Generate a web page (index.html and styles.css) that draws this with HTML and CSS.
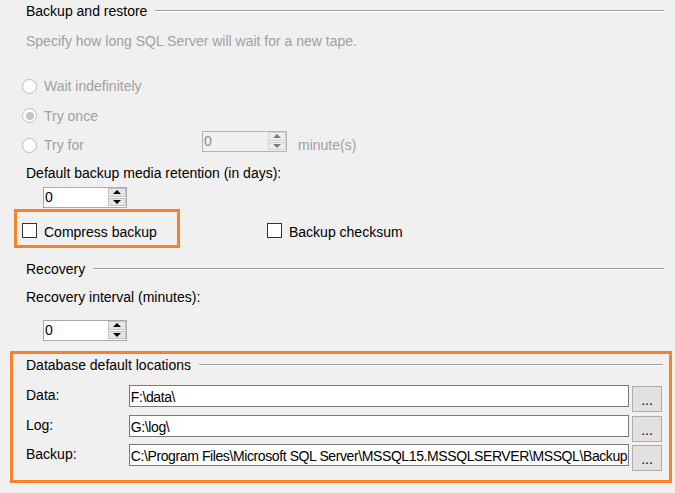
FILE: index.html
```html
<!DOCTYPE html>
<html lang="en">
<head>
    <meta charset="UTF-8">
    <title>Database Settings</title>
    <link rel="stylesheet" href="styles.css">
</head>
<body>
    <div class="page">
        <div class="group-title">
            <span>Backup and restore</span>
            <div class="rule"></div>
        </div>
        <p class="hint">Specify how long SQL Server will wait for a new tape.</p>

        <div class="radio-list">
            <div class="radio disabled"><span class="circle"></span>Wait indefinitely</div>
            <div class="radio disabled checked"><span class="circle"></span>Try once</div>
            <div class="radio-row">
                <div class="radio disabled wide"><span class="circle"></span>Try for</div>
                <div class="spin spin-disabled spin-wide">
                    <span class="spin-value">0</span>
                    <span class="spin-btns"><span class="spin-up"></span><span class="spin-down"></span></span>
                </div>
                <span class="unit">minute(s)</span>
            </div>
        </div>

        <div class="field-label retention">Default backup media retention (in days):</div>
        <div class="spin spin-indent">
            <span class="spin-value">0</span>
            <span class="spin-btns"><span class="spin-up"></span><span class="spin-down"></span></span>
        </div>

        <div class="check-row">
            <div class="highlight small-box">
                <div class="check"><span class="box"></span>Compress backup</div>
            </div>
            <div class="check checksum"><span class="box"></span>Backup checksum</div>
        </div>

        <div class="group-title recovery">
            <span>Recovery</span>
            <div class="rule"></div>
        </div>
        <div class="field-label interval">Recovery interval (minutes):</div>
        <div class="spin spin-indent spin-recovery">
            <span class="spin-value">0</span>
            <span class="spin-btns"><span class="spin-up"></span><span class="spin-down"></span></span>
        </div>

        <div class="highlight locations">
            <div class="group-title">
                <span>Database default locations</span>
                <div class="rule"></div>
            </div>
            <div class="loc-list">
                <div class="loc-row">
                    <span class="loc-label">Data:</span>
                    <div class="path">F:\data\</div>
                    <button class="browse">...</button>
                </div>
                <div class="loc-row">
                    <span class="loc-label">Log:</span>
                    <div class="path">G:\log\</div>
                    <button class="browse">...</button>
                </div>
                <div class="loc-row">
                    <span class="loc-label">Backup:</span>
                    <div class="path">C:\Program Files\Microsoft SQL Server\MSSQL15.MSSQLSERVER\MSSQL\Backup</div>
                    <button class="browse">...</button>
                </div>
            </div>
        </div>
    </div>
</body>
</html>
```

FILE: styles.css
```css
* {
    margin: 0;
    padding: 0;
    box-sizing: border-box;
}

body {
    background: #f0f0f0;
    font-family: 'Liberation Sans', Arial, sans-serif;
    font-size: 14px;
    color: #000;
    width: 675px;
    height: 493px;
    overflow: hidden;
}

.page {
    padding: 0 11px 0 26px;
}

/* group headings with the etched rule */
.group-title {
    display: flex;
    align-items: center;
    gap: 8px;
    height: 22px;
    line-height: 22px;
}

.group-title .rule {
    flex: 1;
    border-top: 1px solid #a0a0a0;
    border-bottom: 1px solid #fff;
    margin-top: -1px;
}

.hint {
    margin-top: 8px;
    line-height: 22px;
    color: #a0a0a0;
}

/* radio buttons */
.radio-list {
    display: flex;
    flex-direction: column;
    gap: 7.5px;
    margin-top: 23px;
}

.radio {
    display: flex;
    align-items: center;
    gap: 7px;
    height: 22px;
    margin-left: -4px;
}

.radio.disabled {
    color: #a0a0a0;
}

.radio .circle {
    width: 15px;
    height: 15px;
    border: 1px solid #bcbcbc;
    border-radius: 50%;
    background: #fff;
    display: flex;
    align-items: center;
    justify-content: center;
}

.radio.checked .circle::after {
    content: '';
    width: 8px;
    height: 8px;
    border-radius: 50%;
    background: #c4c4c4;
}

.radio-row {
    display: flex;
    align-items: flex-start;
}

.radio.wide {
    width: 180px;
}

.unit {
    margin-left: 11px;
    line-height: 22px;
    color: #a0a0a0;
}

.field-label {
    line-height: 22px;
}

.retention {
    margin-top: 6px;
}

.interval {
    margin-top: 6px;
}

/* numeric up/down */
.spin {
    display: flex;
    width: 84px;
    height: 21px;
    background: #fff;
    border: 1px solid #a9a9a9;
}

.spin-indent {
    margin-left: 17px;
    margin-top: 3px;
}

.spin-recovery {
    margin-top: 12px;
}

.spin-wide {
    width: 85px;
    margin-top: -3px;
}

.spin-value {
    flex: 1;
    padding: 0 0 0 1px;
    line-height: 19px;
}

.spin-btns {
    display: flex;
    flex-direction: column;
    gap: 1px;
    width: 18px;
    padding: 0 0 1px 0;
}

.spin-up,
.spin-down {
    flex: 1;
    display: flex;
    align-items: center;
    justify-content: center;
    background: #e6e6e6;
    border: 1px solid #c4c4c4;
}

.spin-up::after {
    content: '';
    border-left: 4px solid transparent;
    border-right: 4px solid transparent;
    border-bottom: 4px solid #000;
}

.spin-down::after {
    content: '';
    border-left: 4px solid transparent;
    border-right: 4px solid transparent;
    border-top: 4px solid #000;
}

.spin-disabled {
    background: #f0f0f0;
    border-color: #b4b4b4;
}

.spin-disabled .spin-value {
    color: #8c8c8c;
}

.spin-disabled .spin-up,
.spin-disabled .spin-down {
    background: #ececec;
    border-color: #d4d4d4;
}

.spin-disabled .spin-up::after {
    border-bottom-color: #7a7a7a;
}

.spin-disabled .spin-down::after {
    border-top-color: #7a7a7a;
}

/* checkboxes */
.check-row {
    display: flex;
    align-items: flex-start;
    margin-top: 1px;
}

.check {
    display: flex;
    align-items: flex-start;
    gap: 7px;
    height: 22px;
    line-height: 22px;
}

.check .box {
    width: 15px;
    height: 15px;
    margin-top: 2px;
    border: 1px solid #333;
    background: #fff;
}

.checksum {
    margin-left: 87px;
    margin-top: 12px;
}

/* orange call-out frames */
.highlight {
    border: 3px solid #f98127;
}

.small-box {
    width: 166px;
    height: 39px;
    margin-left: -12px;
    padding: 9px 0 0 5px;
}

.recovery {
    margin-top: 10px;
}

.locations {
    margin: 10px -8px 0 -16px;
    padding: 0 6px 9px 13px;
}

/* default locations */
.loc-list {
    display: flex;
    flex-direction: column;
    gap: 2.5px;
    margin-top: 9px;
}

.loc-row {
    display: flex;
    align-items: flex-start;
    height: 27px;
    margin-right: 1px;
}

.loc-label {
    width: 103px;
    line-height: 22px;
    margin-top: -1px;
}

.path {
    width: 501px;
    height: 22px;
    padding: 2px 1px 0;
    line-height: 19px;
    letter-spacing: -0.4px;
    background: #fff;
    border: 1px solid #7a7a7a;
    white-space: nowrap;
    overflow: hidden;
}

.browse {
    width: 30px;
    height: 26px;
    margin: 1px 0 0 3px;
    padding-top: 1px;
    background: #e1e1e1;
    border: 1px solid #adadad;
    font-family: inherit;
    font-size: 14px;
    line-height: 24px;
    color: #000;
}
```
